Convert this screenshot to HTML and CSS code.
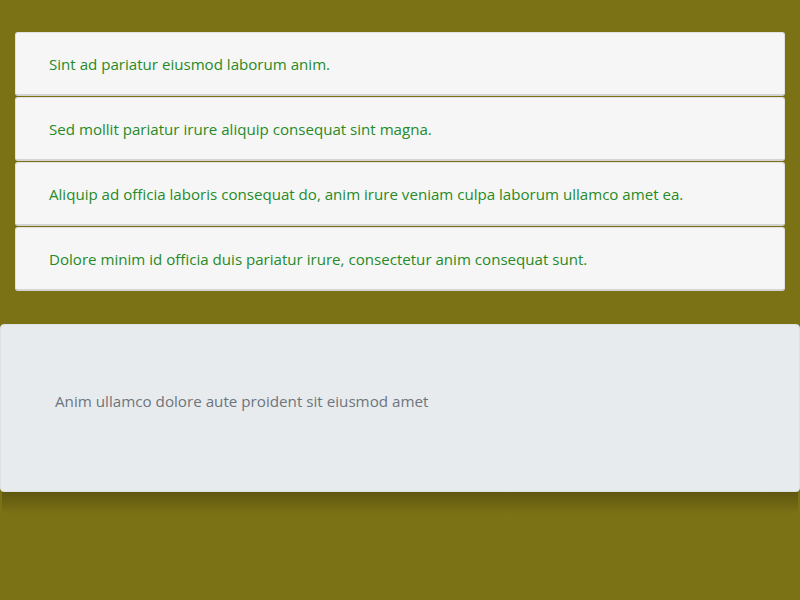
FILE: index.html
```html
<!DOCTYPE html>
<html>
<head>
<meta charset="utf-8">
<link rel="stylesheet" href="styles.css">
</head>
<body>
<div class="page">
  <ul class="list">
    <li class="item">Sint ad pariatur eiusmod laborum anim.</li>
    <li class="item">Sed mollit pariatur irure aliquip consequat sint magna.</li>
    <li class="item">Aliquip ad officia laboris consequat do, anim irure veniam culpa laborum ullamco amet ea.</li>
    <li class="item">Dolore minim id officia duis pariatur irure, consectetur anim consequat sunt.</li>
  </ul>
  <div class="card">
    <p class="card-text">Anim ullamco dolore aute proident sit eiusmod amet</p>
  </div>
  <div class="card-shadow"></div>
</div>
</body>
</html>
```
FILE: styles.css
```css
html, body {
  margin: 0;
  padding: 0;
  background: #7b7115;
  font-family: "Open Sans", "Noto Sans", sans-serif;
}
body {
  min-height: 100vh;
}
.page {
  padding-top: 32px;
}
.list {
  list-style: none;
  margin: 0 15px;
  padding: 0;
  display: flex;
  flex-direction: column;
  gap: 1px;
}
.item {
  background: #f6f6f6;
  border: 1px solid #e2e2e2;
  border-bottom: 2px solid #d4d4d4;
  border-radius: 3px;
  height: 61px;
  box-sizing: content-box;
  padding: 0 33px;
  display: flex;
  align-items: center;
  color: #268a26;
  font-size: 15.1px;
}
.card {
  margin-top: 33px;
  height: 168px;
  background: #e8ebee;
  border: 1px solid #dde0e3;
  border-radius: 4px;
  display: flex;
  align-items: center;
  padding: 0 54px 14px;
  box-sizing: border-box;
}
.card-shadow {
  height: 22px;
  margin: 0 2px;
  background: linear-gradient(to bottom, #5f5710, #7b7115);
}
.card-text {
  margin: 0;
  color: #6c757d;
  font-size: 15.2px;
}
```
